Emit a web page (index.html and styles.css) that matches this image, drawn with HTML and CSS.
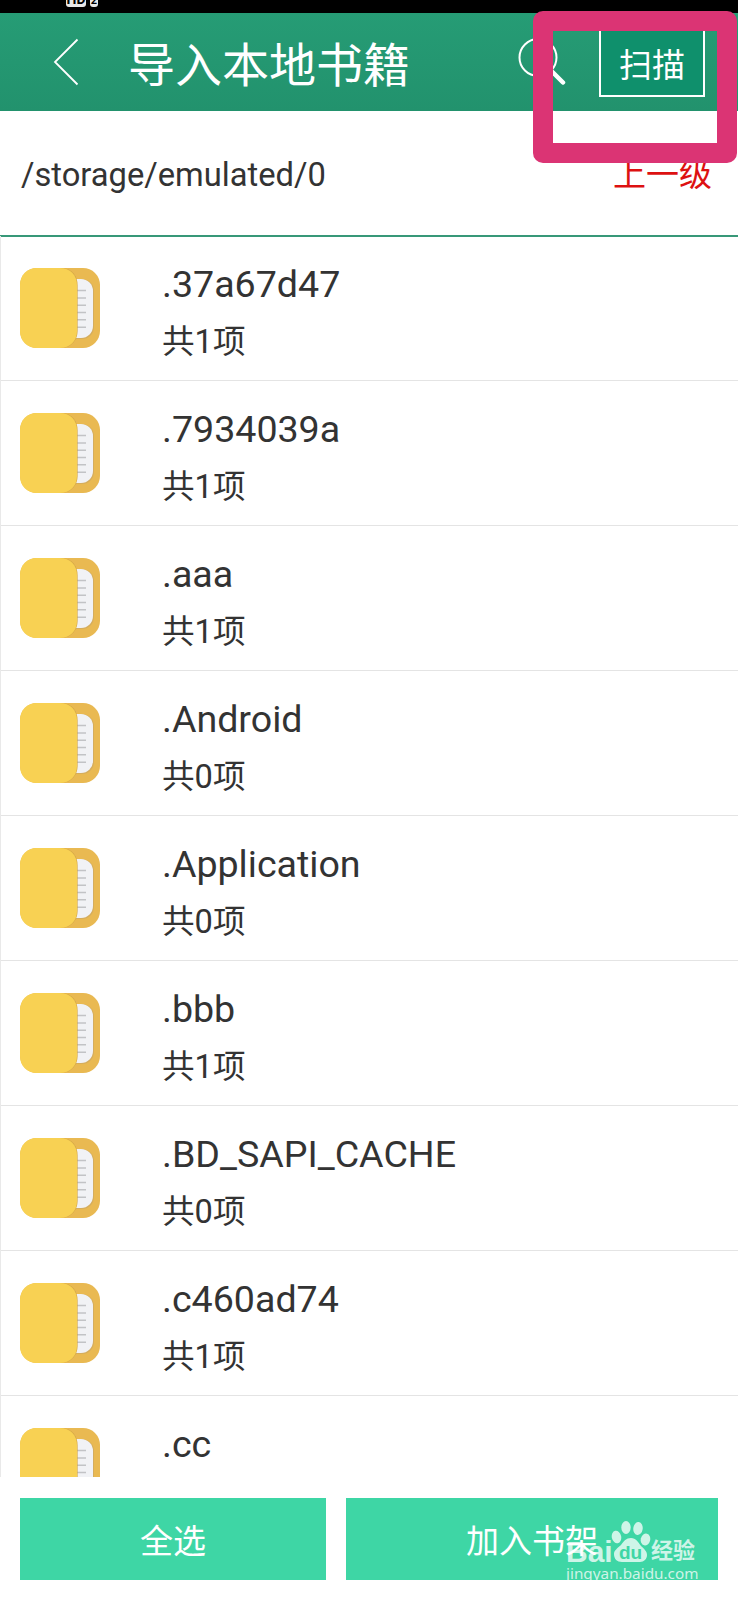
FILE: index.html
```html
<!DOCTYPE html>
<html lang="zh-CN">
<head>
  <title>导入本地书籍</title>
  <meta charset="utf-8">
  <meta name="viewport" content="width=device-width, initial-scale=1">
  <link rel="stylesheet" href="styles.css">
</head>
<body>
  <svg class="sprite" aria-hidden="true">
    <symbol id="folder" viewBox="0 0 80 80">
      <rect width="80" height="80" rx="17" fill="#e9b952"/>
      <rect x="35" y="11" width="39" height="60" rx="12" fill="#d5ad5d"/>
      <rect x="35" y="11" width="38" height="59" rx="12" fill="#f1f2f5"/>
      <path d="M56 22.500h10M56 30h10M56 37.200h10M56 44.500h10M56 51.700h10M56 59.200h10" stroke="#c2c3c6" stroke-width="1.500"/>
      <path d="M17 0h26c9 1 14.600 8 14.600 17v46c0 9-6 16-15 17H17z" fill="#d3a544"/>
      <path d="M17 0h23c10 0 17 7 17 17v46c0 10-7 17-17 17H17C7 80 0 73 0 63V17C0 7 7 0 17 0z" fill="#f8d153"/>
    </symbol>
  </svg>

  <div class="app">
    <div class="status">
      <span class="status-hd">HD</span>
      <span class="status-sim">2</span>
    </div>

    <header class="header">
      <svg class="back" viewBox="0 0 26 48" aria-hidden="true">
        <path d="M24.500 1.500 2 24l22.500 22.500"/>
      </svg>
      <h1 class="title">导入本地书籍</h1>
      <svg class="search" viewBox="0 0 48 48" aria-hidden="true">
        <circle cx="20" cy="19.500" r="18.500"/>
        <path d="M34 33.500 45 44.500" class="search-handle"/>
      </svg>
      <button class="scan">扫描</button>
    </header>

    <div class="path">
      <span class="path-text">/storage/emulated/0</span>
      <a class="path-up">上一级</a>
    </div>

    <ul class="list">
      <li class="item">
        <svg class="item-icon" aria-hidden="true"><use href="#folder"/></svg>
        <div class="item-text"><p class="item-name">.37a67d47</p><p class="item-count">共1项</p></div>
      </li>
      <li class="item">
        <svg class="item-icon" aria-hidden="true"><use href="#folder"/></svg>
        <div class="item-text"><p class="item-name">.7934039a</p><p class="item-count">共1项</p></div>
      </li>
      <li class="item">
        <svg class="item-icon" aria-hidden="true"><use href="#folder"/></svg>
        <div class="item-text"><p class="item-name">.aaa</p><p class="item-count">共1项</p></div>
      </li>
      <li class="item">
        <svg class="item-icon" aria-hidden="true"><use href="#folder"/></svg>
        <div class="item-text"><p class="item-name">.Android</p><p class="item-count">共0项</p></div>
      </li>
      <li class="item">
        <svg class="item-icon" aria-hidden="true"><use href="#folder"/></svg>
        <div class="item-text"><p class="item-name">.Application</p><p class="item-count">共0项</p></div>
      </li>
      <li class="item">
        <svg class="item-icon" aria-hidden="true"><use href="#folder"/></svg>
        <div class="item-text"><p class="item-name">.bbb</p><p class="item-count">共1项</p></div>
      </li>
      <li class="item">
        <svg class="item-icon" aria-hidden="true"><use href="#folder"/></svg>
        <div class="item-text"><p class="item-name">.BD_SAPI_CACHE</p><p class="item-count">共0项</p></div>
      </li>
      <li class="item">
        <svg class="item-icon" aria-hidden="true"><use href="#folder"/></svg>
        <div class="item-text"><p class="item-name">.c460ad74</p><p class="item-count">共1项</p></div>
      </li>
      <li class="item">
        <svg class="item-icon" aria-hidden="true"><use href="#folder"/></svg>
        <div class="item-text"><p class="item-name">.cc</p></div>
      </li>
    </ul>

    <footer class="actions">
      <button class="action">全选</button>
      <button class="action action-wide">加入书架</button>
    </footer>

    <div class="highlight"></div>

    <div class="watermark">
      <div class="watermark-logo">
        <span class="watermark-bai">Bai</span>
        <svg class="paw" viewBox="0 0 40 43" aria-hidden="true">
          <ellipse cx="5.500" cy="17" rx="4.700" ry="6.300" transform="rotate(-12 5.500 17)"/>
          <ellipse cx="15" cy="7.500" rx="4.700" ry="6.500"/>
          <ellipse cx="27" cy="8.500" rx="4.700" ry="6.500" transform="rotate(8 27 8.500)"/>
          <ellipse cx="34.500" cy="19.500" rx="4.700" ry="6" transform="rotate(14 34.500 19.500)"/>
          <path d="M20 18c5 0 7 4 10 8 3 3 6 5 6 9 0 4-3 7-7 7H11c-5 0-8-3-8-8 0-4 4-6 7-9 3-4 5-7 10-7z"/>
          <text x="19.500" y="39" class="paw-du">du</text>
        </svg>
        <span class="watermark-name">经验</span>
      </div>
      <p class="watermark-url">jingyan.baidu.com</p>
    </div>
  </div>
</body>
</html>
```
FILE: styles.css
```css
*, *::before, *::after {
  margin: 0;
  padding: 0;
  box-sizing: border-box;
}

body {
  background-color: #FFFFFF;
  color: #333333;
  font-family: Roboto, "Noto Sans CJK SC", sans-serif;
}

.sprite {
  display: none;
}

.app {
  position: relative;
  display: flex;
  flex-direction: column;
  width: 738px;
  height: 1600px;
  overflow: hidden;
}

.status {
  display: flex;
  align-items: flex-end;
  gap: 4px;
  height: 13px;
  padding: 0 0 6px 66px;
  background-color: #000000;
  overflow: hidden;
}

.status-hd, .status-sim {
  flex: none;
  height: 16px;
  border-radius: 3px;
  background-color: #E8E8E8;
  color: #000000;
  font-size: 14px;
  font-weight: 700;
  line-height: 17px;
  text-align: center;
}

.status-hd {
  width: 20px;
}

.status-sim {
  width: 8px;
  font-size: 11px;
  line-height: 19px;
}

.header {
  display: flex;
  flex: none;
  align-items: center;
  height: 98px;
  padding: 0 33px 0 53px;
  background: linear-gradient(#269C75, #22926D);
  color: #FFFFFF;
}

.back {
  width: 26px;
  height: 48px;
  margin-right: 49px;
  fill: none;
  stroke: #FFFFFF;
  stroke-width: 1.8;
}

.title {
  flex: 1;
  padding-top: 8px;
  font-size: 47px;
  font-weight: 400;
  line-height: 60px;
}

.search {
  width: 48px;
  height: 48px;
  margin-right: 33px;
  fill: none;
  stroke: #FFFFFF;
  stroke-width: 2;
}

.search-handle {
  stroke-width: 4.5;
  stroke-linecap: round;
}

.scan {
  width: 106px;
  height: 70px;
  padding-top: 1px;
  border: 2px solid #FFFFFF;
  background-color: #0F906C;
  color: inherit;
  font-family: inherit;
  font-size: 33px;
}

.path {
  display: flex;
  flex: none;
  align-items: center;
  justify-content: space-between;
  height: 126px;
  padding: 3px 26px 0 21px;
  border-bottom: 2px solid #389878;
  font-size: 32.7px;
  line-height: 44px;
}

.path-up {
  color: #DD1111;
  font-size: 33px;
}

.list {
  flex: 1;
  min-height: 0;
  margin-top: -1px;
  overflow: hidden;
  border-left: 1px solid #E9E9E9;
  list-style: none;
}

.item {
  display: flex;
  height: 145px;
  padding: 32px 20px 0 19px;
  border-bottom: 1px solid #E4E4E4;
}

.item-icon {
  flex: none;
  width: 80px;
  height: 80px;
  margin-right: 62px;
}

.item-text {
  display: flex;
  flex-direction: column;
  gap: 13px;
  margin-top: -6px;
}

.item-name {
  font-size: 37.6px;
  line-height: 44px;
}

.item-count {
  font-size: 32.6px;
  line-height: 46px;
}

.actions {
  display: flex;
  flex: none;
  gap: 20px;
  height: 123px;
  padding: 21px 20px 20px;
}

.action {
  width: 306px;
  border: none;
  background-color: #3ED6A5;
  color: #FFFFFF;
  font-family: inherit;
  font-size: 33px;
}

.action-wide {
  width: 372px;
}

/* Marker frame drawn over the scan button */
.highlight {
  position: absolute;
  top: 11px;
  left: 533px;
  width: 204px;
  height: 152px;
  border: 20px solid #DB3474;
  border-radius: 10px;
}

.watermark {
  position: absolute;
  top: 1520px;
  left: 566px;
  color: rgba(255, 255, 255, 0.75);
}

.watermark-logo {
  display: flex;
  align-items: flex-end;
  height: 43px;
}

.watermark-bai {
  width: 45px;
  font-family: "Liberation Sans", sans-serif;
  font-size: 30px;
  font-weight: 700;
  line-height: 23px;
}

.paw {
  width: 40px;
  height: 43px;
  fill: rgba(255, 255, 255, 0.75);
}

.paw-du {
  fill: #3ED6A5;
  font-family: "Liberation Sans", sans-serif;
  font-size: 19px;
  font-weight: 700;
  text-anchor: middle;
}

.watermark-name {
  font-size: 22px;
  font-weight: 700;
  line-height: 25px;
}

.watermark-url {
  font-family: "Noto Sans", sans-serif;
  font-size: 15.3px;
  line-height: 20px;
}
```
